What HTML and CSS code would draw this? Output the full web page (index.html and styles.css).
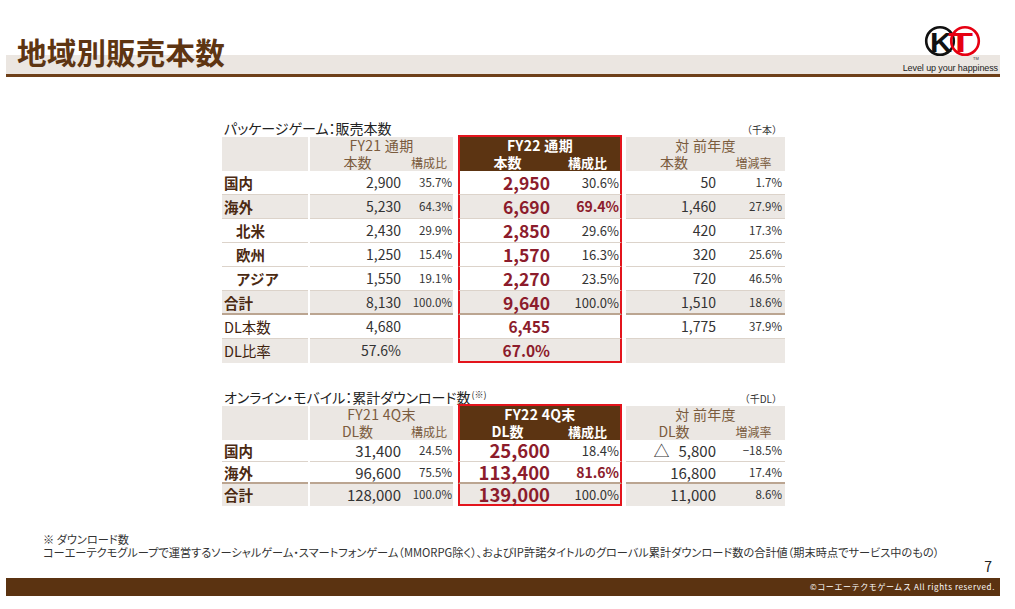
FILE: index.html
```html
<!DOCTYPE html>
<html lang="ja">
<head>
<meta charset="utf-8">
<title>地域別販売本数</title>
<link rel="stylesheet" href="styles.css">
</head>
<body>
<header class="top">
  <h1 class="title">地域別販売本数</h1>
  <div class="brand">
    <svg class="logo" width="62" height="40" viewBox="0 0 62 40">
      <circle cx="20" cy="20" r="13.8" fill="none" stroke="#111" stroke-width="2.6"/>
      <circle cx="45" cy="20" r="13.8" fill="none" stroke="#e60012" stroke-width="2.6"/>
      <text x="10" y="31" class="lk" textLength="22" lengthAdjust="spacingAndGlyphs">K</text>
      <text x="28" y="31" class="lt" textLength="25" lengthAdjust="spacingAndGlyphs">T</text>
      <text x="53" y="39" class="tm">TM</text>
    </svg>
    <div class="tag">Level up your happiness</div>
  </div>
</header>

<main class="content">
  <section class="block b1">
    <div class="cap"><span class="cap-t">パッケージゲーム：販売本数</span><span class="unit">（千本）</span></div>
    <div class="tbl t1">
      <div class="row head">
        <div class="h hlab"></div>
        <div class="h grp g21"><div class="ht">FY21 通期</div><div class="hs"><span class="s1">本数</span><span class="s2">構成比</span></div></div>
        <div class="h grp g22"><div class="ht">FY22 通期</div><div class="hs"><span class="s1">本数</span><span class="s2">構成比</span></div></div>
        <div class="h grp gy"><div class="ht">対 前年度</div><div class="hs"><span class="s1">本数</span><span class="s2">増減率</span></div></div>
      </div>
      <div class="row">
        <div class="c lab">国内</div><div class="c n1">2,900</div><div class="c p1">35.7%</div>
        <div class="c n2">2,950</div><div class="c p2">30.6%</div>
        <div class="c n3">50</div><div class="c p3">1.7%</div>
      </div>
      <div class="row gray">
        <div class="c lab">海外</div><div class="c n1">5,230</div><div class="c p1">64.3%</div>
        <div class="c n2">6,690</div><div class="c p2 hi">69.4%</div>
        <div class="c n3">1,460</div><div class="c p3">27.9%</div>
      </div>
      <div class="row">
        <div class="c lab in">北米</div><div class="c n1">2,430</div><div class="c p1">29.9%</div>
        <div class="c n2">2,850</div><div class="c p2">29.6%</div>
        <div class="c n3">420</div><div class="c p3">17.3%</div>
      </div>
      <div class="row">
        <div class="c lab in">欧州</div><div class="c n1">1,250</div><div class="c p1">15.4%</div>
        <div class="c n2">1,570</div><div class="c p2">16.3%</div>
        <div class="c n3">320</div><div class="c p3">25.6%</div>
      </div>
      <div class="row">
        <div class="c lab in">アジア</div><div class="c n1">1,550</div><div class="c p1">19.1%</div>
        <div class="c n2">2,270</div><div class="c p2">23.5%</div>
        <div class="c n3">720</div><div class="c p3">46.5%</div>
      </div>
      <div class="row gray thick">
        <div class="c lab">合計</div><div class="c n1">8,130</div><div class="c p1">100.0%</div>
        <div class="c n2">9,640</div><div class="c p2">100.0%</div>
        <div class="c n3">1,510</div><div class="c p3">18.6%</div>
      </div>
      <div class="row">
        <div class="c lab rg">DL本数</div><div class="c n1">4,680</div><div class="c p1"></div>
        <div class="c n2 sm">6,455</div><div class="c p2"></div>
        <div class="c n3">1,775</div><div class="c p3">37.9%</div>
      </div>
      <div class="row gray last">
        <div class="c lab rg">DL比率</div><div class="c n1">57.6%</div><div class="c p1"></div>
        <div class="c n2 sm">67.0%</div><div class="c p2"></div>
        <div class="c n3"></div><div class="c p3"></div>
      </div>
    </div>
  </section>

  <section class="block b2">
    <div class="cap"><span class="cap-t">オンライン・モバイル：累計ダウンロード数<sup class="ref">(※)</sup></span><span class="unit">（千DL）</span></div>
    <div class="tbl t2">
      <div class="row head">
        <div class="h hlab"></div>
        <div class="h grp g21"><div class="ht">FY21 4Q末</div><div class="hs"><span class="s1">DL数</span><span class="s2">構成比</span></div></div>
        <div class="h grp g22"><div class="ht">FY22 4Q末</div><div class="hs"><span class="s1">DL数</span><span class="s2">構成比</span></div></div>
        <div class="h grp gy"><div class="ht">対 前年度</div><div class="hs"><span class="s1">DL数</span><span class="s2">増減率</span></div></div>
      </div>
      <div class="row">
        <div class="c lab">国内</div><div class="c n1">31,400</div><div class="c p1">24.5%</div>
        <div class="c n2">25,600</div><div class="c p2">18.4%</div>
        <div class="c n3"><span class="tri">△</span>5,800</div><div class="c p3">−18.5%</div>
      </div>
      <div class="row thick">
        <div class="c lab">海外</div><div class="c n1">96,600</div><div class="c p1">75.5%</div>
        <div class="c n2">113,400</div><div class="c p2 hi">81.6%</div>
        <div class="c n3">16,800</div><div class="c p3">17.4%</div>
      </div>
      <div class="row gray last">
        <div class="c lab">合計</div><div class="c n1">128,000</div><div class="c p1">100.0%</div>
        <div class="c n2">139,000</div><div class="c p2">100.0%</div>
        <div class="c n3">11,000</div><div class="c p3">8.6%</div>
      </div>
    </div>
  </section>
</main>

<footer class="foot">
  <div class="note">
    <p>※ ダウンロード数</p>
    <p>コーエーテクモグループで運営するソーシャルゲーム・スマートフォンゲーム（MMORPG除く）、およびIP許諾タイトルのグローバル累計ダウンロード数の合計値（期末時点でサービス中のもの）</p>
  </div>
  <div class="pn">7</div>
  <div class="bar">©コーエーテクモゲームス All rights reserved.</div>
</footer>
</body>
</html>
```

FILE: styles.css
```css
* { box-sizing: border-box; margin: 0; padding: 0; }
html, body { width: 1015px; height: 609px; }
body {
  background: #fff;
  font-family: "Noto Sans CJK JP", "Noto Sans", sans-serif;
  color: #333;
  overflow: hidden;
}

/* header */
.top {
  display: flex;
  justify-content: space-between;
  align-items: flex-start;
  height: 77px;
  margin: 0 15px 0 6px;
  padding: 0 2px 0 11px;
  background: linear-gradient(to bottom, #fff 0, #fff 55px, #ebe6e1 55px, #ebe6e1 74px, #6e4019 74px, #6e4019 77px);
}
.title {
  margin-top: 36px;
  font-size: 29.5px;
  line-height: 30px;
  font-weight: 700;
  color: #5e3512;
  letter-spacing: 0.2px;
}
.brand {
  margin-top: 21px;
  display: flex;
  flex-direction: column;
  align-items: flex-end;
}
.logo { display: block; margin-right: 16px; }
.lk, .lt { font-family: "Liberation Sans", Arial, sans-serif; font-weight: 700; font-size: 27px; }
.lk { fill: #111; }
.lt { fill: #e60012; }
.tm { font-family: "Liberation Sans", Arial, sans-serif; font-size: 4px; fill: #333; }
.tag {
  margin-top: 2px;
  font-family: "Liberation Sans", Arial, sans-serif;
  font-size: 9px;
  line-height: 10px;
  color: #222;
  letter-spacing: -0.1px;
}

/* content */
.content { padding-left: 222px; margin-top: 43px; }
.block { width: 563px; }
.b2 { margin-top: 26px; }
.cap {
  display: flex;
  justify-content: space-between;
  align-items: baseline;
  height: 16px;
  line-height: 16px;
  margin-bottom: 1px;
  padding: 0 3px 0 2px;
}
.cap-t { font-size: 14px; color: #222; font-feature-settings: "palt"; }
.ref { font-size: 9px; vertical-align: 5px; line-height: 0; margin-left: 1px; }
.unit { font-size: 10px; color: #333; }

.row {
  display: grid;
  grid-template-columns: 86px 97px 48px 102px 67px 100px 63px;
}

/* table header */
.head { height: 34px; }
.h { height: 34px; background: #ebe7e3; }
.grp { grid-column: span 2; color: #7a5b3d; }
.g21 { margin-left: 2px; }
.g22 {
  margin-left: 5px;
  margin-top: -2px;
  height: 36px;
  border: 2px solid #e3141c;
  border-bottom: 0;
  background: #5c3412;
  color: #fff;
  font-weight: 700;
}
.gy { margin-left: 4px; }
.ht { height: 17px; line-height: 17px; text-align: center; font-size: 14px; letter-spacing: 0.3px; }
.hs { display: grid; height: 17px; line-height: 17px; }
.g21 .hs { grid-template-columns: 95px 48px; }
.g22 .hs { grid-template-columns: 95px 65px; }
.gy .hs { grid-template-columns: 96px 63px; }
.hs span { text-align: center; font-size: 14px; }
.hs .s2 { font-size: 12px; }
.g22 .hs .s2 { font-size: 13px; }

/* table cells */
.c {
  height: 24px;
  line-height: 23px;
  border-bottom: 1px solid #dcd3ca;
  white-space: nowrap;
  font-size: 14px;
  color: #333;
}
.t2 .c { height: 22px; line-height: 21px; font-size: 15px; }
.gray .c { background: #ece8e4; }
.thick .c { border-bottom: 2px solid #bba591; }
.last .c { border-bottom: 0; }

.t1 .lab, .t2 .lab {
  padding-left: 2px;
  font-weight: 700;
  color: #4b2a12;
  font-size: 14.5px;
}
.lab.in { padding-left: 14px; }
.lab.rg { font-weight: 400; color: #3f230e; }

.n1 { margin-left: 2px; text-align: right; padding-right: 4px; }
.t1 .p1, .t2 .p1, .t1 .p3, .t2 .p3 { font-size: 11.5px; }
.p1 { text-align: right; padding-right: 1px; }
.t1 .n2, .t2 .n2 {
  margin-left: 5px;
  border-left: 2px solid #e3141c;
  text-align: right;
  padding-right: 5px;
  font-weight: 700;
  color: #8c1c2c;
  font-size: 17.5px;
}
.t2 .n2 { font-size: 18.5px; }
.t1 .n2.sm { font-size: 15.5px; }
.t1 .p2, .t2 .p2 {
  border-right: 2px solid #e3141c;
  text-align: right;
  padding-right: 1px;
  font-size: 13px;
}
.t1 .p2.hi, .t2 .p2.hi { font-weight: 700; color: #8c1c2c; font-size: 14px; }
.n3 { margin-left: 4px; text-align: right; padding-right: 6px; }
.p3 { text-align: right; padding-right: 3px; }
.tri { font-size: 16px; margin-right: 9px; }
.last .n2, .last .p2 { border-bottom: 2px solid #e3141c !important; }

/* footer */
.note {
  margin-top: 27px;
  padding-left: 43px;
  font-size: 11.2px;
  line-height: 13px;
  color: #333;
  font-feature-settings: "palt";
  white-space: nowrap;
}
.pn {
  text-align: right;
  padding-right: 23px;
  font-size: 14px;
  line-height: 14px;
  color: #222;
}
.bar {
  margin: 5px 15px 0 6px;
  height: 18px;
  background: #5b3311;
  color: #fff;
  font-size: 8px;
  line-height: 18px;
  text-align: right;
  padding-right: 5px;
  letter-spacing: 0.6px;
}
```
